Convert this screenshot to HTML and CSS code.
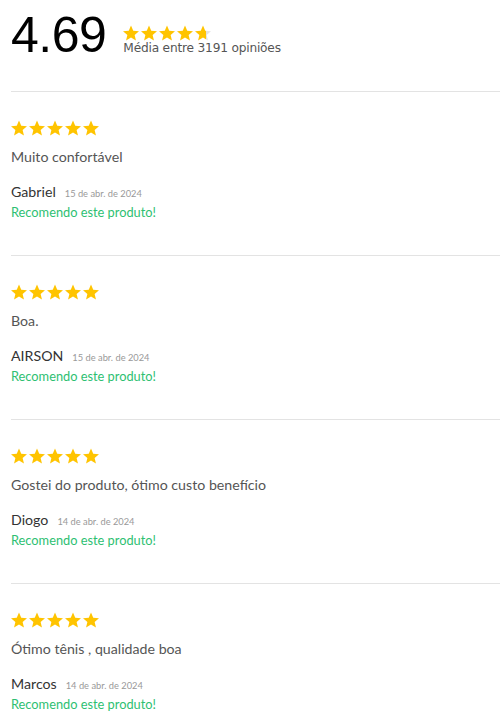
FILE: index.html
```html
<!DOCTYPE html>
<html lang="pt-BR">
<head>
<meta charset="utf-8">
<link rel="stylesheet" href="styles.css">
</head>
<body>
<svg width="0" height="0" class="defs">
  <defs>
    <symbol id="star" viewBox="2 1.5 20 20"><path d="M12 17.27L18.18 21l-1.64-7.03L22 9.24l-7.19-.61L12 2 9.19 8.63 2 9.24l5.46 4.73L5.82 21z"/></symbol>
    <linearGradient id="part" x1="0" x2="1" y1="0" y2="0">
      <stop offset="0.66" stop-color="#ffc400"/>
      <stop offset="0.66" stop-color="#e2e2e2"/>
    </linearGradient>
  </defs>
</svg>
<div class="page">
  <header class="summary">
    <div class="score">4.69</div>
    <div class="summary-info">
      <div class="stars stars-sm">
        <svg><use href="#star"/></svg><svg><use href="#star"/></svg><svg><use href="#star"/></svg><svg><use href="#star"/></svg><svg class="partial"><use href="#star"/></svg>
      </div>
      <div class="count">Média entre 3191 opiniões</div>
    </div>
  </header>

  <article class="review">
    <div class="stars"><svg><use href="#star"/></svg><svg><use href="#star"/></svg><svg><use href="#star"/></svg><svg><use href="#star"/></svg><svg><use href="#star"/></svg></div>
    <p class="text">Muito confortável</p>
    <div class="author"><span class="name">Gabriel</span><span class="date">15 de abr. de 2024</span></div>
    <div class="recommend">Recomendo este produto!</div>
  </article>

  <article class="review">
    <div class="stars"><svg><use href="#star"/></svg><svg><use href="#star"/></svg><svg><use href="#star"/></svg><svg><use href="#star"/></svg><svg><use href="#star"/></svg></div>
    <p class="text">Boa.</p>
    <div class="author"><span class="name">AIRSON</span><span class="date">15 de abr. de 2024</span></div>
    <div class="recommend">Recomendo este produto!</div>
  </article>

  <article class="review">
    <div class="stars"><svg><use href="#star"/></svg><svg><use href="#star"/></svg><svg><use href="#star"/></svg><svg><use href="#star"/></svg><svg><use href="#star"/></svg></div>
    <p class="text">Gostei do produto, ótimo custo benefício</p>
    <div class="author"><span class="name">Diogo</span><span class="date">14 de abr. de 2024</span></div>
    <div class="recommend">Recomendo este produto!</div>
  </article>

  <article class="review">
    <div class="stars"><svg><use href="#star"/></svg><svg><use href="#star"/></svg><svg><use href="#star"/></svg><svg><use href="#star"/></svg><svg><use href="#star"/></svg></div>
    <p class="text">Ótimo tênis , qualidade boa</p>
    <div class="author"><span class="name">Marcos</span><span class="date">14 de abr. de 2024</span></div>
    <div class="recommend">Recomendo este produto!</div>
  </article>
</div>
</body>
</html>
```

FILE: styles.css
```css
html, body {
  margin: 0;
  padding: 0;
  background: #fff;
}
.defs {
  position: absolute;
  width: 0;
  height: 0;
}
.page {
  padding-left: 11px;
  font-family: Lato, "Noto Sans", sans-serif;
}
.summary {
  display: flex;
  align-items: flex-start;
  gap: 17px;
  padding-top: 10px;
  height: 81px;
  border-bottom: 1px solid #e3e3e3;
}
.score {
  font-family: "Liberation Sans", Arial, sans-serif;
  font-size: 50px;
  line-height: 50px;
  color: #000;
  letter-spacing: -0.5px;
}
.summary-info {
  margin-top: 15px;
  display: flex;
  flex-direction: column;
}
.stars {
  display: flex;
  gap: 2px;
  height: 16px;
}
.stars svg {
  width: 16px;
  height: 16px;
  fill: #ffc400;
}
.stars svg.partial {
  fill: url(#part);
}
.count {
  font-family: "DejaVu Sans", Verdana, sans-serif;
  font-size: 12.2px;
  line-height: 14px;
  color: #555;
  letter-spacing: -0.2px;
}
.review {
  padding: 28px 0 35px;
  border-bottom: 1px solid #e3e3e3;
}
.text {
  margin: 11px 0 0;
  font-size: 14.2px;
  line-height: 20px;
  color: #555;
}
.author {
  margin-top: 15px;
  display: flex;
  align-items: baseline;
  gap: 9px;
  line-height: 20px;
}
.name {
  font-size: 14.2px;
  color: #333;
}
.date {
  font-size: 9.3px;
  color: #999;
}
.recommend {
  margin-top: 0;
  font-size: 12.8px;
  line-height: 16px;
  color: #2ebf72;
}
```
